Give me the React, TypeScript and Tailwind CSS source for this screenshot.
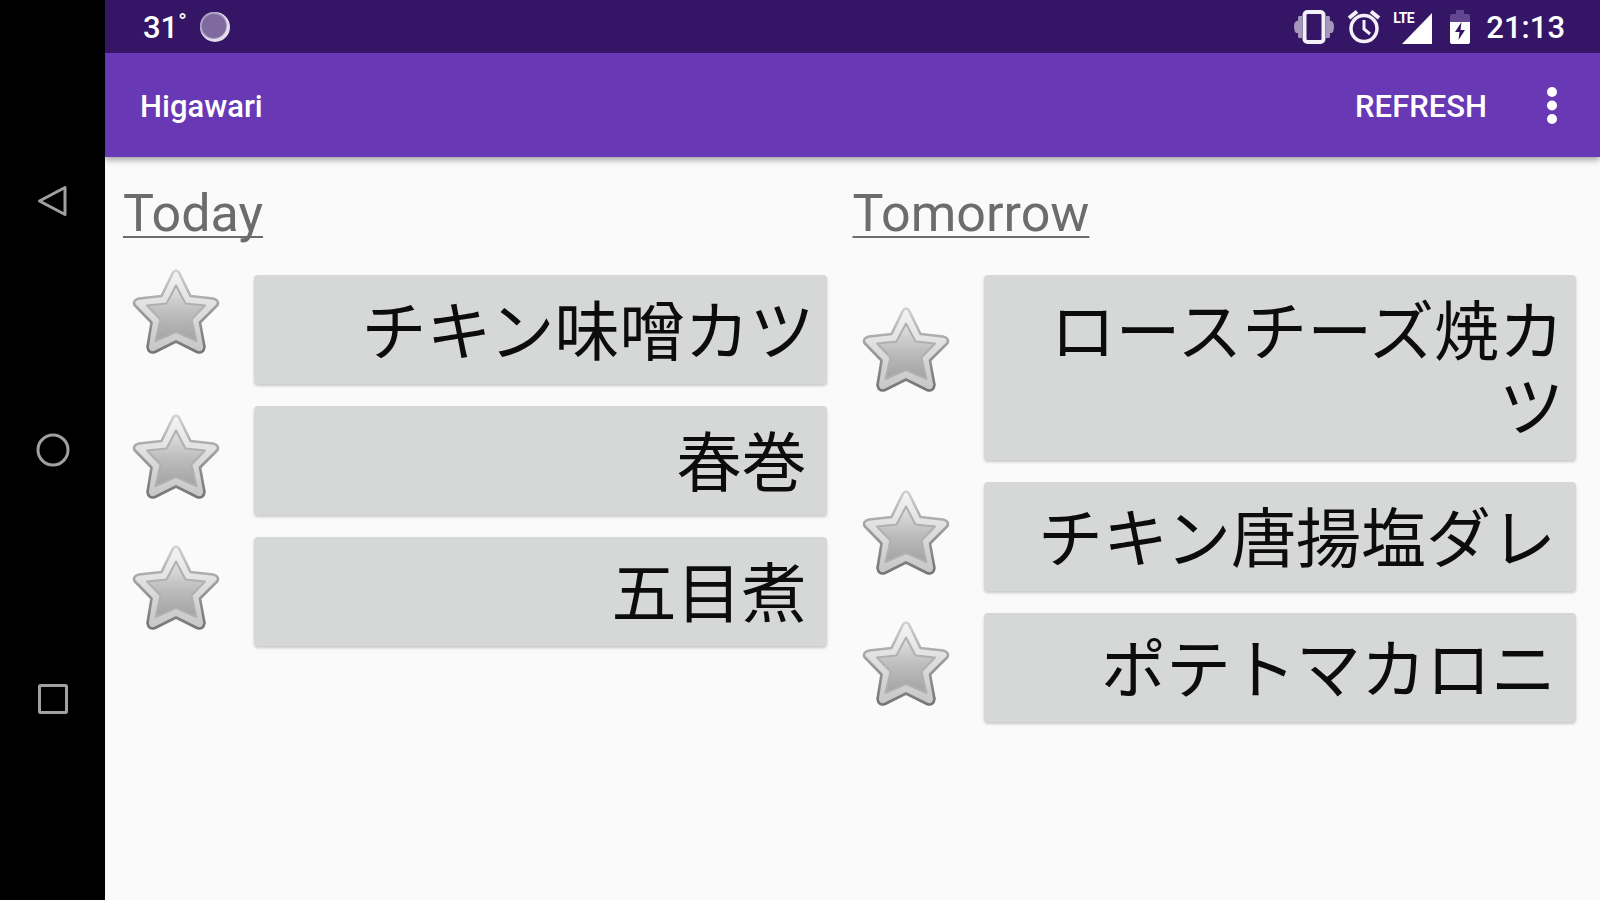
import React from "react";

type Dish = { name: string; lead?: boolean };

const today: Dish[] = [{ name: "チキン味噌カツ", lead: true }, { name: "春巻" }, { name: "五目煮" }];
const tomorrow: Dish[] = [
  { name: "ロースチーズ焼カツ", lead: true },
  { name: "チキン唐揚塩ダレ" },
  { name: "ポテトマカロニ" },
];

function Star() {
  return (
    <svg viewBox="0 0 88 88" className="size-[88px]" aria-hidden="true">
      <defs>
        <linearGradient id="rim" x1="0" y1="0" x2="0" y2="1">
          <stop offset="0" stopColor="#d0d0d0" />
          <stop offset="0.5" stopColor="#9b9b9b" />
          <stop offset="1" stopColor="#757575" />
        </linearGradient>
        <linearGradient id="body" x1="0" y1="0" x2="0" y2="1">
          <stop offset="0" stopColor="#f4f4f4" />
          <stop offset="1" stopColor="#c6c6c6" />
        </linearGradient>
        <linearGradient id="core" x1="0" y1="0" x2="0" y2="1">
          <stop offset="0" stopColor="#e2e2e2" />
          <stop offset="0.5" stopColor="#bdbdbd" />
          <stop offset="1" stopColor="#a2a2a2" />
        </linearGradient>
      </defs>
      <path
        d="M41 4.500Q44 0.500 47 4.500L58.500 28L81 30.500Q87.500 32 85.500 37L68 54.500L72.500 79Q71.500 86 65 84L44 73.500L23 84Q16.500 86 15.500 79L19.500 54.500L2.500 37Q0.500 32 7 30.500L29.500 28Z"
        fill="url(#body)"
        stroke="url(#rim)"
        strokeWidth="2.6"
        strokeLinejoin="round"
      />
      <path
        d="M44 17.500L53.500 35.500L73 37.500L59.500 51.500L64.500 73L44 64L23.500 73L28.500 51.500L15 37.500L34.500 35.500Z"
        fill="url(#core)"
        stroke="#b0b0b0"
        strokeWidth="2"
        strokeLinejoin="round"
      />
    </svg>
  );
}

function DishRow({ name, lead }: Dish) {
  return (
    <li className="grid grid-cols-[131px_1fr] items-center">
      <button
        type="button"
        aria-label={`Favorite ${name}`}
        className={`ml-[9px] size-[88px] ${lead ? "-mt-9" : "-mt-2"}`}
      >
        <Star />
      </button>
      <button
        type="button"
        className={`rounded-[4px] bg-[#d6d8d7] pt-[14px] pb-[19px] pl-10 text-right font-['Noto_Sans_CJK_JP',sans-serif] text-[65px] leading-[76px] text-[#0c0c0c] shadow-[0_2px_3px_rgba(0,0,0,0.2)] ${lead ? "pr-3" : "pr-5"}`}
      >
        {name}
      </button>
    </li>
  );
}

function Day({ title, dishes, className }: { title: string; dishes: Dish[]; className: string }) {
  return (
    <section className={`w-1/2 ${className}`}>
      <h2 className="pt-[25px] text-[52px] leading-[64px] text-[#6c6c6c] underline decoration-2 underline-offset-[5px] [text-decoration-skip-ink:none]">
        {title}
      </h2>
      <ul className="mt-[29px] flex flex-col gap-[22px]">
        {dishes.map((d) => (
          <DishRow key={d.name} {...d} />
        ))}
      </ul>
    </section>
  );
}

function NavButton({ label, children }: { label: string; children: React.ReactNode }) {
  return (
    <button type="button" aria-label={label} className="size-[34px]">
      <svg viewBox="0 0 34 34" className="size-[34px]" fill="none" stroke="#a0a0a0" strokeWidth="3">
        {children}
      </svg>
    </button>
  );
}

export default function App() {
  return (
    <div className="flex min-h-screen bg-[#fafafa] font-['Roboto',sans-serif]">
      <nav className="flex w-[105px] shrink-0 flex-col items-center justify-center gap-[215px] bg-black">
        <NavButton label="Back">
          <path d="M3.500 17L29 3.500V30.500Z" strokeLinejoin="round" />
        </NavButton>
        <NavButton label="Home">
          <circle cx="17" cy="17" r="15" />
        </NavButton>
        <NavButton label="Recent apps">
          <rect x="3.500" y="3.500" width="27" height="27" rx="1" />
        </NavButton>
      </nav>

      <div className="min-w-0 flex-1">
        <div className="relative z-10 flex h-[53px] items-center bg-[#351666] pr-[35px] pl-[38px] text-[31px] font-medium text-white">
          <span className="flex w-[42px] items-start pt-[3px]">
            31<span className="text-[22px] leading-[34px] font-bold">°</span>
          </span>
          <svg viewBox="0 0 32 32" className="ml-[14px] size-8" aria-hidden="true">
            <circle cx="16" cy="16" r="15" fill="#e4dcee" />
            <circle cx="14.500" cy="14.500" r="13.500" fill="#a99bc2" />
            <circle cx="15" cy="15" r="12" fill="#7e6a9f" />
          </svg>
          <div className="ml-auto flex items-center">
            <svg viewBox="0 0 42 36" className="h-9 w-[42px]" aria-hidden="true">
              <path
                d="M9 7v22H6q-1 0-1-2v-3H3q-2-2-2-6t2-6h2V9q0-2 1-2ZM33 7v22h3q1 0 1-2v-3h2q2-2 2-6t-2-6h-2V9q0-2-1-2Z"
                fill="#a597bb"
              />
              <rect x="11.500" y="3" width="19" height="30" rx="3" fill="#351666" stroke="#f4f0f8" strokeWidth="4" />
            </svg>
            <svg viewBox="0 0 34 36" className="ml-3 h-9 w-[34px]" fill="none" stroke="#f4f0f8" aria-hidden="true">
              <circle cx="17" cy="19.500" r="13" strokeWidth="3.500" />
              <path d="M17 11v9l6 5" strokeWidth="3" />
              <path d="M2 9l8-6.500M32 9l-8-6.500" strokeWidth="4" />
            </svg>
            <span className="relative ml-3 h-9 w-10">
              <svg viewBox="0 0 40 36" className="h-9 w-10" aria-hidden="true">
                <path d="M9 35L39 4V35Z" fill="#fff" />
              </svg>
              <span className="absolute top-0 left-0 bg-[#351666] text-[14px] leading-[18px] font-bold tracking-tighter">
                LTE
              </span>
            </span>
            <svg viewBox="0 0 22 36" className="ml-4 h-9 w-[22px]" aria-hidden="true">
              <path d="M7 1h8v4h4q2 0 2 2v6H1V7q0-2 2-2h4Z" fill="#62468f" />
              <path d="M1 13h20v20q0 2-2 2H3q-2 0-2-2Z" fill="#fff" />
              <path d="M12.500 13L6 23h4.500l-1 8L16 21h-4.500Z" fill="#351666" />
            </svg>
            <time className="ml-[15px] pt-[3px]">21:13</time>
          </div>
        </div>

        <header className="relative flex h-[104px] items-center bg-[#6838b5] pr-[37px] pl-[35px] text-white shadow-[0_3px_6px_rgba(0,0,0,0.35)]">
          <h1 className="pt-1 text-[31px] font-medium">Higawari</h1>
          <button type="button" className="ml-auto pt-1 text-[31px] font-medium">
            REFRESH
          </button>
          <button type="button" aria-label="More options" className="ml-[54px] h-10 w-[22px]">
            <svg viewBox="0 0 22 40" className="h-10 w-[22px]" fill="#fff">
              <circle cx="11" cy="7" r="5" />
              <circle cx="11" cy="20.500" r="5" />
              <circle cx="11" cy="34" r="5" />
            </svg>
          </button>
        </header>

        <main className="flex">
          <Day title="Today" dishes={today} className="pr-[26px] pl-[18px]" />
          <Day title="Tomorrow" dishes={tomorrow} className="pr-6" />
        </main>
      </div>
    </div>
  );
}
